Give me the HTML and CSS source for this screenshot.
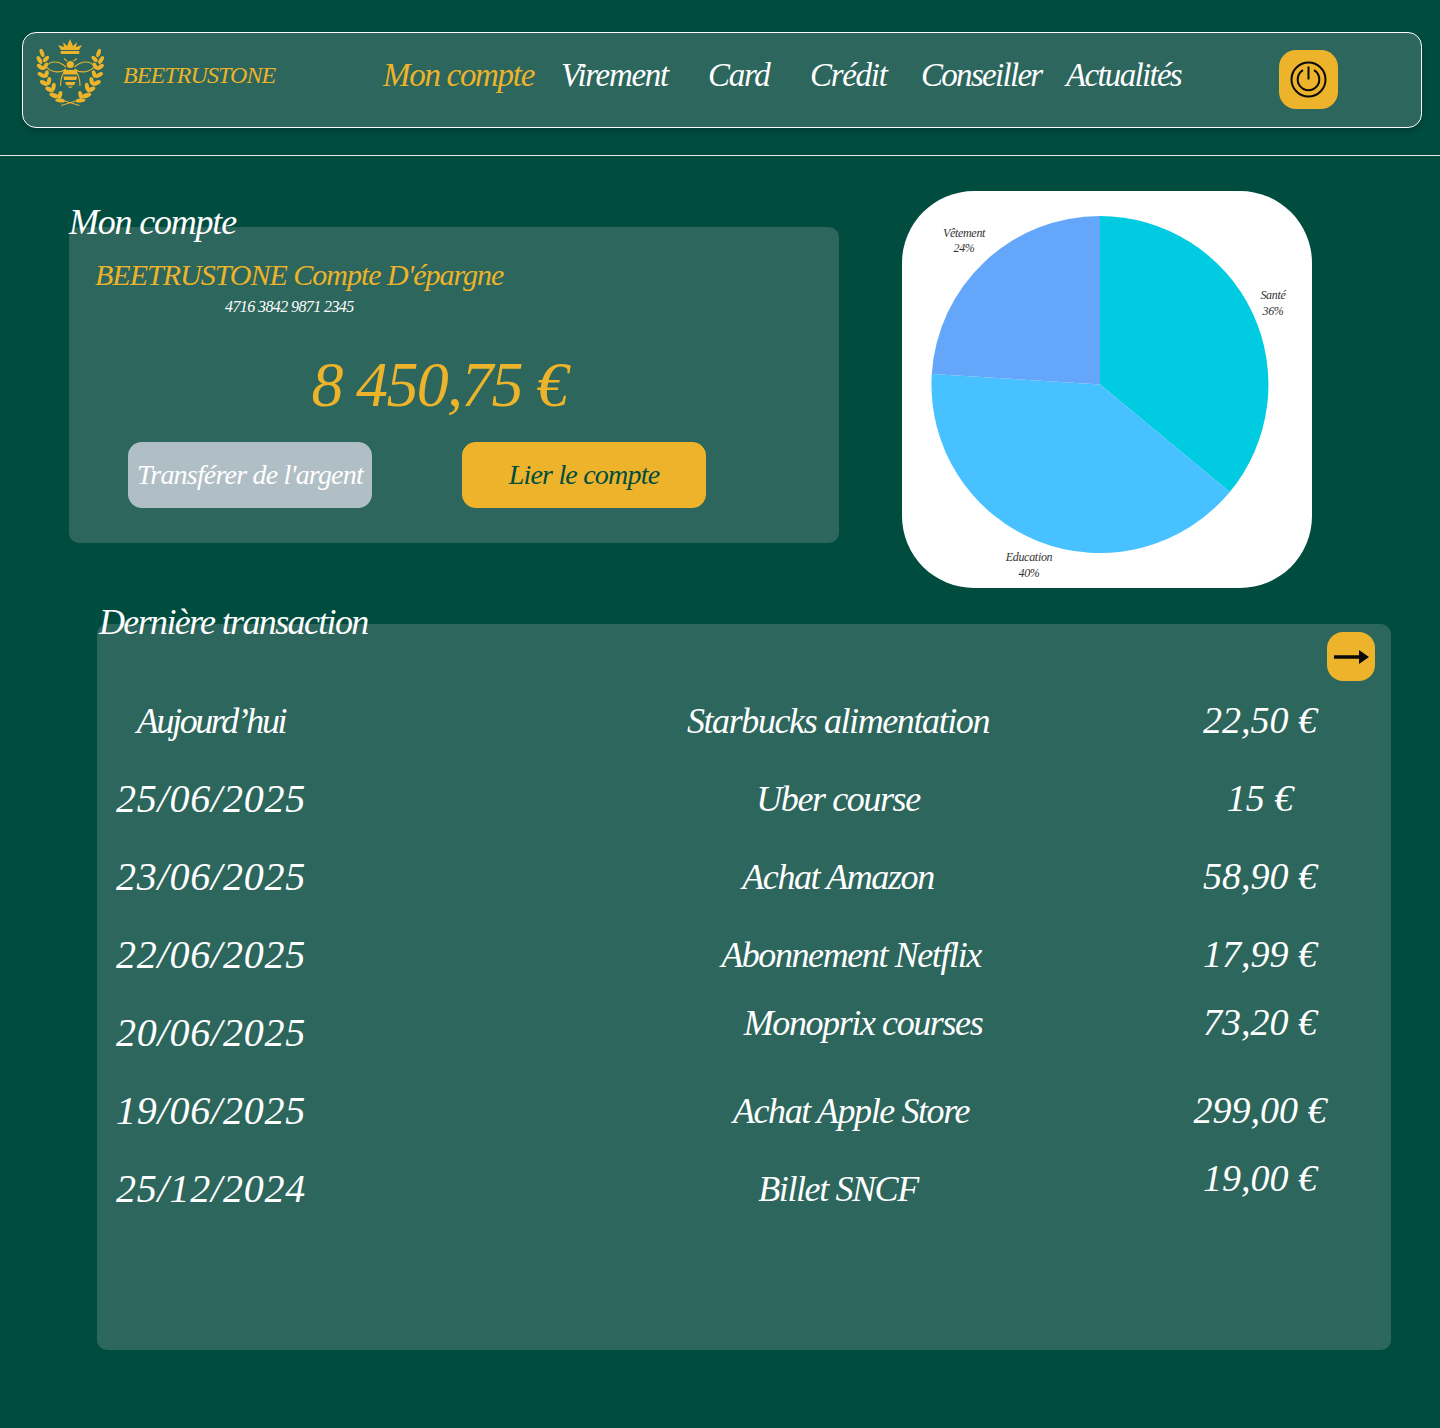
FILE: index.html
```html
<!DOCTYPE html>
<html lang="fr">
<head>
	<meta charset="UTF-8">
	<meta name="viewport" content="width=device-width, initial-scale=1.0">
	<title>Beetrustone</title>
	<link rel="stylesheet" href="styles.css">
</head>
<body>
	<header class="topbar">
		<svg class="logo" viewBox="36 37 70 71">
			<g fill="#ecb32b">
				<polygon points="61,50 58,45 64,47 63,42 67,46 70,39 73,46 77,42 76,47 82,45 79,50"/>
				<rect x="60.5" y="51" width="19" height="3" rx="1"/>
				<circle cx="70.3" cy="64.5" r="3.6"/>
				<path d="M63.500 70h13.500v4.500H63.500zM63.500 76.500h13.500l-.6 3.500H64.100zM65 82h10.500l-1.500 3.200H66.500zM67.500 86.500h5.500l-2.700 1.800z"/>
				<g id="laurel">
					<ellipse cx="42" cy="53" rx="4.300" ry="2" transform="rotate(70 42 53)"/>
					<ellipse cx="39.500" cy="60" rx="4.300" ry="2.100" transform="rotate(60 39.500 60)"/>
					<ellipse cx="46" cy="59" rx="3.800" ry="2" transform="rotate(-45 46 59)"/>
					<ellipse cx="40.500" cy="67" rx="4.300" ry="2.100" transform="rotate(35 40.500 67)"/>
					<ellipse cx="45.500" cy="66" rx="3.800" ry="2" transform="rotate(-65 45.500 66)"/>
					<ellipse cx="41.500" cy="75" rx="4.300" ry="2.100" transform="rotate(30 41.500 75)"/>
					<ellipse cx="46.500" cy="74" rx="3.800" ry="2.100" transform="rotate(-75 46.500 74)"/>
					<ellipse cx="44" cy="83" rx="4.500" ry="2.200" transform="rotate(25 44 83)"/>
					<ellipse cx="49" cy="81" rx="4" ry="2.100" transform="rotate(-80 49 81)"/>
					<ellipse cx="49.500" cy="89.500" rx="4.500" ry="2.300" transform="rotate(25 49.500 89.500)"/>
					<ellipse cx="53.500" cy="87" rx="4.200" ry="2.100" transform="rotate(-80 53.500 87)"/>
					<ellipse cx="54" cy="95.500" rx="4.800" ry="2.300" transform="rotate(20 54 95.500)"/>
					<ellipse cx="60" cy="95" rx="4.200" ry="2.100" transform="rotate(-75 60 95)"/>
					<ellipse cx="60" cy="100.500" rx="4.800" ry="2" transform="rotate(5 60 100.500)"/>
				</g>
				<use href="#laurel" transform="matrix(-1 0 0 1 140.600 0)"/>
			</g>
			<g fill="none" stroke="#ecb32b" stroke-width="1.100">
				<path d="M67 61l-3-2.500M73.500 61l3.500-2.500"/>
				<path d="M66 67C58 60 50 61 46 66.500C50 72 60 74 66 69"/>
				<path d="M74.500 67C82.500 60 90.500 61 94.500 66.500C90.500 72 80.500 74 74.500 69"/>
				<path d="M64 72C61.500 76 60.500 81 60.500 86M76.500 72C79 76 80 81 80 86"/>
				<path d="M61 105.500L79 100M79.500 105.500L61.500 100" stroke-width="1"/>
			</g>
		</svg>
		<span class="brand">BEETRUSTONE</span>
		<nav class="menu">
			<a class="menu-item active">Mon compte</a>
			<a class="menu-item">Virement</a>
			<a class="menu-item">Card</a>
			<a class="menu-item">Crédit</a>
			<a class="menu-item tight">Conseiller</a>
			<a class="menu-item tight">Actualités</a>
		</nav>
		<button class="power">
			<svg width="40" height="40" viewBox="0.5 0.5 40 40" fill="none" stroke="#0a0a0a" stroke-width="2">
				<circle cx="20" cy="20" r="17"/>
				<path d="M14.500 10.700A10.800 10.800 0 1 0 25.500 10.700"/>
				<path d="M20 7v13"/>
			</svg>
		</button>
	</header>
	<hr class="divider">

	<section class="summary">
		<div class="account">
			<h2 class="block-title">Mon compte</h2>
			<div class="account-panel">
				<div class="account-name">BEETRUSTONE Compte D'épargne</div>
				<div class="account-number">4716 3842 9871 2345</div>
				<div class="balance">8 450,75 €</div>
				<div class="actions">
					<button class="btn btn-grey">Transférer de l'argent</button>
					<button class="btn btn-gold">Lier le compte</button>
				</div>
			</div>
		</div>
		<div class="chart">
			<svg width="410" height="397" viewBox="0 0 410 397">
				<path d="M198 193.500V25A168.500 168.500 0 0 1 327.800 300.900Z" fill="#00cbe0"/>
				<path d="M198 193.500L327.800 300.900A168.500 168.500 0 0 1 29.800 182.900Z" fill="#47c1ff"/>
				<path d="M198 193.500L29.800 182.900A168.500 168.500 0 0 1 198 25Z" fill="#64a6fa"/>
				<g class="chart-label">
					<text x="62" y="46">Vêtement</text>
					<text x="62" y="61">24%</text>
					<text x="371" y="108">Santé</text>
					<text x="371" y="124">36%</text>
					<text x="127" y="370">Education</text>
					<text x="127" y="386">40%</text>
				</g>
			</svg>
		</div>
	</section>

	<section class="history">
		<h2 class="block-title history-title">Dernière transaction</h2>
		<div class="history-panel">
			<button class="more">
				<svg width="35" height="14" viewBox="0 0 35 14">
					<path d="M0 5.300h25V0l10 7-10 7V8.700H0z" fill="#0a0a0a"/>
				</svg>
			</button>
			<div class="row"><span class="label word">Aujourd’hui</span><span class="label detail">Starbucks alimentation</span><span class="amount">22,50 €</span></div>
			<div class="row"><span class="date">25/06/2025</span><span class="label detail">Uber course</span><span class="amount">15 €</span></div>
			<div class="row"><span class="date">23/06/2025</span><span class="label detail">Achat Amazon</span><span class="amount">58,90 €</span></div>
			<div class="row"><span class="date">22/06/2025</span><span class="label detail shift">Abonnement Netflix</span><span class="amount">17,99 €</span></div>
			<div class="row"><span class="date">20/06/2025</span><span class="label detail shift-more raised">Monoprix courses</span><span class="amount raised">73,20 €</span></div>
			<div class="row"><span class="date">19/06/2025</span><span class="label detail shift">Achat Apple Store</span><span class="amount">299,00 €</span></div>
			<div class="row"><span class="date">25/12/2024</span><span class="label detail">Billet SNCF</span><span class="amount raised">19,00 €</span></div>
		</div>
	</section>
</body>
</html>
```

FILE: styles.css
```css
*{margin:0; padding:0; box-sizing:border-box;}
body{
	height:1428px;
	overflow:hidden;
	background-color:#004d40;
	color:#fff;
	font-family:"Liberation Serif",serif;
	font-style:italic;
}
button{
	border:none;
	font:inherit;
	cursor:pointer;
}
.topbar{
	display:flex;
	align-items:flex-start;
	height:96px;
	margin:32px 18px 0 22px;
	padding-left:13px;
	background-color:#2c665c;
	border:1px solid #fff;
	border-radius:14px;
	box-shadow:0 4px 8px rgba(0,0,0,0.2);
}
.logo{
	width:70px;
	height:71px;
	margin-top:4px;
}
.brand{
	width:260px;
	margin:24px 0 0 17px;
	font-size:24px;
	line-height:36px;
	letter-spacing:-0.9px;
	color:#ecb32b;
}
.menu{
	display:grid;
	grid-template-columns:178px 147px 102px 111px 145px 118px;
	margin-top:20px;
	font-size:33px;
	line-height:44px;
	letter-spacing:-1.3px;
	white-space:nowrap;
}
.menu-item{color:#fff;}
.menu-item.active{color:#ecb32b;}
.menu-item.tight{letter-spacing:-1.7px;}
.power{
	display:flex;
	justify-content:center;
	align-items:center;
	width:59px;
	height:59px;
	margin:17px 0 0 95px;
	background-color:#ecb32b;
	border-radius:17px;
}
.divider{
	margin-top:27px;
	border:none;
	border-top:1px solid #dfe9e6;
}
.summary{
	display:flex;
	align-items:flex-start;
	margin-top:35px;
	padding-left:69px;
}
.account{
	width:770px;
	margin-top:9px;
}
.block-title{
	font-size:36px;
	font-weight:normal;
	line-height:44px;
	letter-spacing:-1.2px;
	margin-bottom:-17px;
}
.account-panel{
	height:316px;
	padding:30px 0 0 26px;
	background-color:#2c665c;
	border-radius:10px;
}
.account-name{
	font-size:30px;
	line-height:36px;
	letter-spacing:-1px;
	color:#ecb32b;
}
.account-number{
	padding-left:130px;
	margin-top:4px;
	font-size:16px;
	line-height:20px;
	letter-spacing:-0.6px;
}
.balance{
	margin-top:28px;
	padding-right:56px;
	font-size:64px;
	line-height:80px;
	letter-spacing:-1.7px;
	text-align:center;
	color:#ecb32b;
}
.actions{
	display:flex;
	gap:90px;
	margin:17px 0 0 33px;
}
.btn{
	width:244px;
	height:66px;
	border-radius:14px;
	font-size:28px;
	letter-spacing:-0.8px;
	white-space:nowrap;
}
.btn-grey{
	background-color:#b0bec5;
	color:#fff;
}
.btn-gold{
	background-color:#ecb32b;
	color:#004d40;
}
.chart{
	width:410px;
	height:397px;
	margin-left:63px;
	background-color:#fff;
	border-radius:72px;
}
.chart svg{display:block;}
.chart-label text{
	font-size:12px;
	letter-spacing:-0.3px;
	fill:#333;
	text-anchor:middle;
}
.history{
	width:1294px;
	margin:12px 0 0 97px;
}
.history-title{
	margin-bottom:-20px;
	padding-left:2px;
	letter-spacing:-1.65px;
}
.history-panel{
	display:flex;
	flex-direction:column;
	height:726px;
	padding-top:8px;
	background-color:#2c665c;
	border-radius:10px;
}
.more{
	display:flex;
	justify-content:center;
	align-items:center;
	align-self:flex-end;
	width:48px;
	height:49px;
	margin:0 16px 1px 0;
	background-color:#ecb32b;
	border-radius:16px;
}
.row{
	display:grid;
	grid-template-columns:228px 804px 1fr;
	align-items:center;
	height:78px;
	text-align:center;
}
.date{
	padding-bottom:2px;
	font-size:40px;
	letter-spacing:0.8px;
}
.amount{
	padding-bottom:2px;
	font-size:38px;
}
.label{
	font-size:36px;
	letter-spacing:-1.4px;
}
.word{letter-spacing:-2.4px;}
.detail{padding-left:222px;}
.detail.shift{padding-left:248px;}
.detail.shift-more{padding-left:272px;}
.raised{margin-bottom:20px;}
```
